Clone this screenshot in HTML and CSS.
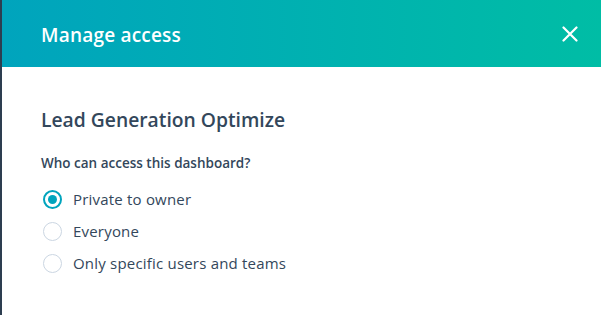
FILE: index.html
```html
<!DOCTYPE html>
<html>
<head>
<meta charset="utf-8">
<link rel="stylesheet" href="styles.css">
</head>
<body>
<div class="dialog">
  <header class="header">
    <h1 class="title">Manage access</h1>
    <button class="close" aria-label="Close">
      <svg width="16" height="16" viewBox="0 0 16 16"><path d="M1.5 1.5 L14.5 14.5 M14.5 1.5 L1.5 14.5" stroke="#fff" stroke-width="2.2" stroke-linecap="round" fill="none"/></svg>
    </button>
  </header>
  <main class="body">
    <h2 class="name">Lead Generation Optimize</h2>
    <p class="question">Who can access this dashboard?</p>
    <div class="options">
      <label class="option"><span class="radio checked"></span><span class="label">Private to owner</span></label>
      <label class="option"><span class="radio"></span><span class="label">Everyone</span></label>
      <label class="option"><span class="radio"></span><span class="label">Only specific users and teams</span></label>
    </div>
  </main>
</div>
</body>
</html>
```
FILE: styles.css
```css
* { box-sizing: border-box; }
html, body { margin: 0; padding: 0; background: #fff; }
body { font-family: "Open Sans", Lato, sans-serif; color: #33475b; }
.dialog {
  width: 601px;
  height: 315px;
  border-left: 2px solid #2d3e50;
  background: #fff;
}
.header {
  height: 67px;
  background: linear-gradient(90deg, #00a4bd 0%, #00bda5 100%);
  display: flex;
  align-items: center;
  justify-content: space-between;
  padding: 0 23px 0 39px;
}
.title {
  margin: 0;
  color: #fff;
  font-size: 19px;
  font-weight: 600;
  letter-spacing: 0.2px;
  position: relative;
  top: 1px;
}
.close {
  border: 0;
  background: none;
  padding: 0;
  width: 16px;
  height: 16px;
  display: flex;
  cursor: pointer;
}
.body { padding: 39px 0 0 39px; }
.name {
  margin: 0;
  font-size: 19.3px;
  font-weight: 600;
  line-height: 28px;
}
.question {
  margin: 19px 0 0;
  font-size: 13.5px;
  font-weight: 600;
  line-height: 20px;
}
.options {
  margin-top: 16px;
  display: flex;
  flex-direction: column;
  gap: 12px;
}
.option {
  display: flex;
  align-items: center;
  gap: 11px;
  height: 20px;
  font-size: 15px;
  letter-spacing: 0.2px;
}
.radio {
  width: 19px;
  height: 19px;
  border-radius: 50%;
  border: 1.5px solid #cbd6e2;
  display: flex;
  align-items: center;
  justify-content: center;
  margin-left: 2px;
}
.radio.checked { border: 2px solid #00a4bd; }
.radio.checked::after {
  content: "";
  width: 9px;
  height: 9px;
  border-radius: 50%;
  background: #00a4bd;
}
```
